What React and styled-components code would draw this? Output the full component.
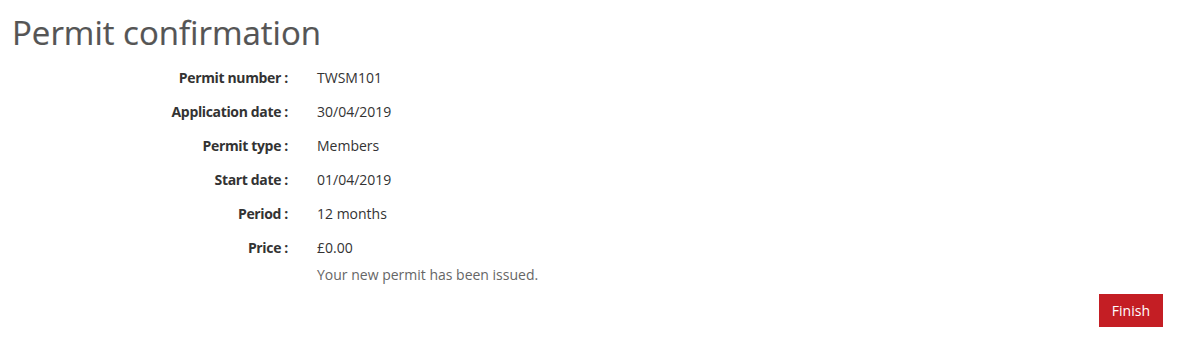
import React from 'react';
import styled, { createGlobalStyle } from 'styled-components';

const GlobalStyle = createGlobalStyle`
  body {
    margin: 0;
    background: #fff;
    font-family: "Open Sans", "Noto Sans", sans-serif;
    color: #333;
  }
`

const Page = styled.div`
  padding: 10px 20px 0 12px;
`

const Title = styled.h1`
  margin: 0 0 5px;
  font-size: 33px;
  font-weight: 400;
  line-height: 46px;
  color: #555;
  -webkit-text-stroke: 0.2px #555;
`

const Details = styled.dl`
  display: grid;
  grid-template-columns: 276px 1fr;
  column-gap: 29px;
  margin: 0;
`

const Label = styled.dt`
  text-align: right;
  font-size: 14px;
  font-weight: 700;
  letter-spacing: -0.35px;
  line-height: 34px;
  color: #333;
`

const Value = styled.dd`
  margin: 0;
  font-size: 14px;
  line-height: 34px;
  color: #333;
`

const Message = styled.p`
  grid-column: 2;
  margin: 0;
  font-size: 14px;
  line-height: 20px;
  color: #666;
`

const Actions = styled.div`
  display: flex;
  justify-content: flex-end;
  margin-top: 9px;
`

const Button = styled.button`
  background: #c41e24;
  color: #fff;
  border: none;
  height: 33px;
  padding: 0 13px;
  font-family: "Open Sans", "Noto Sans", sans-serif;
  font-size: 14px;
  cursor: pointer;
`

const rows = [
  ['Permit number', 'TWSM101'],
  ['Application date', '30/04/2019'],
  ['Permit type', 'Members'],
  ['Start date', '01/04/2019'],
  ['Period', '12 months'],
  ['Price', '£0.00'],
]

const App = () => {
  return (
    <Page>
      <GlobalStyle />
      <Title>Permit confirmation</Title>
      <Details>
        {rows.map(([label, value]) => (
          <React.Fragment key={label}>
            <Label>{label} :</Label>
            <Value>{value}</Value>
          </React.Fragment>
        ))}
        <Message>Your new permit has been issued.</Message>
      </Details>
      <Actions>
        <Button>Finish</Button>
      </Actions>
    </Page>
  )
}

export default App;
